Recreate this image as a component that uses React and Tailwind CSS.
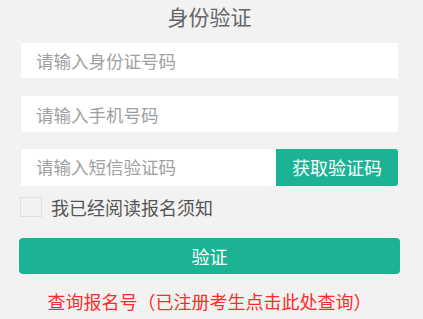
import { useState } from 'react';

const font = { fontFamily: '"Microsoft YaHei", "Noto Sans CJK SC", sans-serif' };

export default function App() {
  const [agreed, setAgreed] = useState(false);

  return (
    <div className="min-h-[319px] w-full bg-[#f2f2f2]" style={font}>
      <div className="ml-[19px] w-[381px] pt-[1px]">
        <h2 className="text-center text-[21px] leading-[30px] text-[#666]">身份验证</h2>

        <div className="mt-[12px] flex flex-col gap-[18px]">
          <input
            className="mx-[2px] h-[35px] bg-white px-[15px] text-[17.5px] text-[#333] outline-none placeholder:text-[#a0a0a0]"
            placeholder="请输入身份证号码"
          />
          <input
            className="mx-[2px] h-[36px] bg-white px-[15px] text-[17.5px] text-[#333] outline-none placeholder:text-[#a0a0a0]"
            placeholder="请输入手机号码"
          />
          <div className="mx-[2px] -mt-[1px] flex h-[37px]">
            <input
              className="min-w-0 flex-1 bg-white px-[15px] text-[17.5px] text-[#333] outline-none placeholder:text-[#a0a0a0]"
              placeholder="请输入短信验证码"
            />
            <button className="w-[122px] rounded-r-[3px] bg-[#1bb394] text-[18px] text-white">
              获取验证码
            </button>
          </div>
        </div>

        <label className="mt-[11px] flex cursor-pointer items-center gap-[9px]">
          <span
            onClick={() => setAgreed(!agreed)}
            className={`ml-[1px] h-[20px] w-[22px] border border-[#e0e0e0] ${agreed ? 'bg-[#1bb394]' : 'bg-[#f2f2f2]'}`}
          />
          <span className="text-[18px] leading-[20px] text-[#555]">我已经阅读报名须知</span>
        </label>

        <button className="mt-[21px] h-[36px] w-full rounded-[4px] bg-[#1bb394] text-[18px] text-white">
          验证
        </button>

        <p className="mt-[15px] text-center text-[18px] leading-[24px] text-[#ff2b2b]">
          查询报名号（已注册考生点击此处查询）
        </p>
      </div>
    </div>
  );
}
